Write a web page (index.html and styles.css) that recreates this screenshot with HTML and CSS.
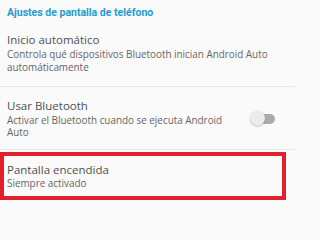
FILE: index.html
```html
<!DOCTYPE html>
<html lang="es">
<head>
<meta charset="utf-8">
<title>Ajustes</title>
<link rel="stylesheet" href="styles.css">
</head>
<body>
<div class="screen">
  <div class="section-header">Ajustes de pantalla de teléfono</div>
  <div class="item item-first">
    <div class="text">
      <div class="title">Inicio automático</div>
      <div class="sub">Controla qué dispositivos Bluetooth inician Android Auto automáticamente</div>
    </div>
  </div>
  <div class="item item-row">
    <div class="text text-narrow">
      <div class="title">Usar Bluetooth</div>
      <div class="sub">Activar el Bluetooth cuando se ejecuta Android Auto</div>
    </div>
    <div class="switch"><span class="track"></span><span class="thumb"></span></div>
  </div>
  <div class="highlight">
    <div class="title">Pantalla encendida</div>
    <div class="sub sub-tight">Siempre activado</div>
  </div>
</div>
</body>
</html>
```
FILE: styles.css
```css
html, body {
  margin: 0;
  padding: 0;
  background: #fafafa;
}
.screen {
  width: 295px;
  height: 207px;
  overflow: hidden;
  font-family: "Open Sans", "Noto Sans", sans-serif;
  background: #fafafa;
}
.section-header {
  padding: 5.9px 7px 2.8px;
  font-family: Roboto, "Noto Sans", sans-serif;
  font-size: 10.5px;
  line-height: 13px;
  font-weight: bold;
  color: #1f9ad5;
}
.item {
  padding: 11.8px 7px 10.1px;
  border-bottom: 1px solid #e4e4e4;
}
.item-first {
  padding-bottom: 12.8px;
}
.item-row {
  display: flex;
  align-items: center;
  padding-right: 20.5px;
}
.text {
  flex: 1;
  min-width: 0;
}
.text-narrow {
  flex: 0 0 226px;
  width: 226px;
}
.title {
  font-size: 11.5px;
  line-height: 14px;
  color: #4f4f4f;
}
.sub {
  margin-top: 0.8px;
  font-size: 9.9px;
  line-height: 12.5px;
  color: #656565;
}
.sub-tight {
  margin-top: 0;
}
.switch {
  position: relative;
  margin-left: auto;
  width: 25px;
  height: 15px;
  flex: none;
}
.track {
  position: absolute;
  left: 8px;
  right: 0;
  top: 2.5px;
  height: 10px;
  border-radius: 5px;
  background: #ababab;
}
.thumb {
  position: absolute;
  left: 0;
  top: 0;
  width: 15px;
  height: 15px;
  border-radius: 50%;
  background: #ececec;
  box-shadow: 0 0.5px 1.5px rgba(0,0,0,0.3);
}
.highlight {
  margin: 2.7px 9px 0 0;
  padding: 7px 7px 6.5px 3px;
  border: 4.5px solid #e41e2b;
  border-left-width: 4px;
}
```
